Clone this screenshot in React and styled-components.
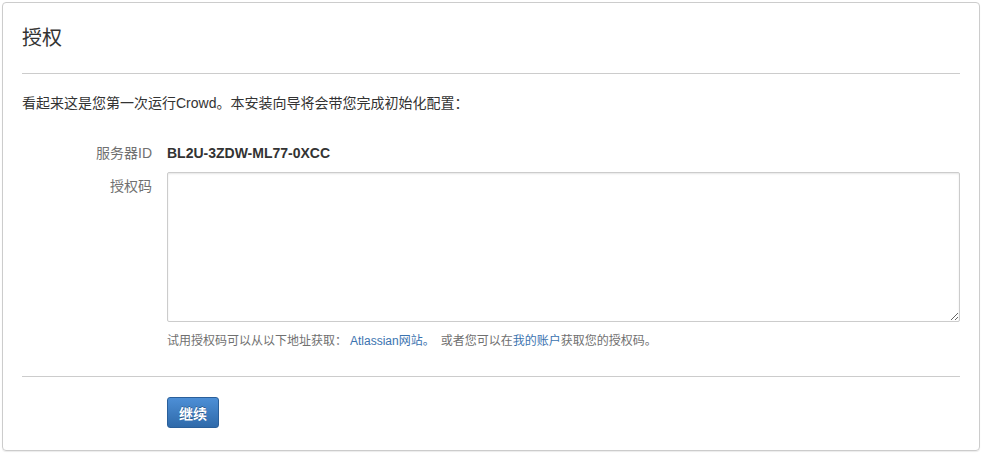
import React from "react";
import styled, { createGlobalStyle } from "styled-components";

const Global = createGlobalStyle`
  html, body {
    margin: 0;
    padding: 0;
    background: #fff;
  }
  body {
    font-family: "Liberation Sans", Arial, "Noto Sans CJK SC", sans-serif;
    font-size: 14px;
    color: #333;
  }
`;

const Panel = styled.div`
  margin: 2px;
  width: 978px;
  height: 449px;
  box-sizing: border-box;
  border: 1px solid #ccc;
  border-radius: 4px;
  box-shadow: 0 1px 1px rgba(0, 0, 0, 0.08);
  padding: 0 19px;
`;

const Title = styled.h2`
  margin: 0;
  padding-top: 22px;
  font-size: 20px;
  line-height: 26px;
  font-weight: normal;
  color: #333;
`;

const Rule = styled.hr`
  border: 0;
  border-top: 1px solid #ccc;
  margin: ${p => p.$top}px 0 0;
  height: 0;
`;

const Intro = styled.p`
  margin: 19px 0 0;
  line-height: 20px;
`;

const Form = styled.div`
  margin-top: 30px;
  display: flex;
  flex-direction: column;
  gap: ${p => p.$gap || 9}px;
`;

const Row = styled.div`
  display: grid;
  grid-template-columns: 130px 1fr;
  column-gap: 15px;
  align-items: start;
`;

const Label = styled.div`
  text-align: right;
  color: #707070;
  line-height: 20px;
  padding-top: ${p => (p.$offset ? p.$offset : 0)}px;
`;

const Value = styled.div`
  font-weight: bold;
  line-height: 20px;
`;

const Field = styled.div`
  display: flex;
  flex-direction: column;
`;

const TextArea = styled.textarea`
  box-sizing: border-box;
  width: 100%;
  height: 150px;
  border: 1px solid #ccc;
  border-radius: 2px;
  box-shadow: inset 0 1px 2px rgba(0, 0, 0, 0.1);
  font: inherit;
  resize: vertical;
  outline: none;
`;

const Help = styled.div`
  margin-top: 11px;
  font-size: 12px;
  line-height: 16px;
  color: #707070;
`;

const Link = styled.a`
  color: #3b73af;
  text-decoration: none;
  margin: ${p => (p.$space ? "0 6px 0 3px" : "0")};
`;

const Actions = styled.div`
  margin-top: 20px;
  padding-left: 145px;
`;

const Button = styled.button`
  height: 31px;
  padding: 0 11px;
  font-family: inherit;
  font-size: 14px;
  font-weight: bold;
  color: #fff;
  text-shadow: 0 -1px 0 rgba(0, 0, 0, 0.3);
  background: linear-gradient(#4d8fd6, #2f6aaa);
  border: 1px solid #2a5f9a;
  border-radius: 3px;
  cursor: pointer;
`;

export default function App() {
  return (
    <>
      <Global />
      <Panel>
        <Title>授权</Title>
        <Rule $top={22} />
        <Intro>看起来这是您第一次运行Crowd。本安装向导将会带您完成初始化配置：</Intro>
        <Form>
          <Row>
            <Label>服务器ID</Label>
            <Value>BL2U-3ZDW-ML77-0XCC</Value>
          </Row>
          <Row>
            <Label $offset={4}>授权码</Label>
            <Field>
              <TextArea />
              <Help>
                试用授权码可以从以下地址获取：
                <Link href="#" $space>Atlassian网站。</Link>
                或者您可以在<Link href="#">我的账户</Link>获取您的授权码。
              </Help>
            </Field>
          </Row>
        </Form>
        <Rule $top={27} />
        <Actions>
          <Button>继续</Button>
        </Actions>
      </Panel>
    </>
  );
}
